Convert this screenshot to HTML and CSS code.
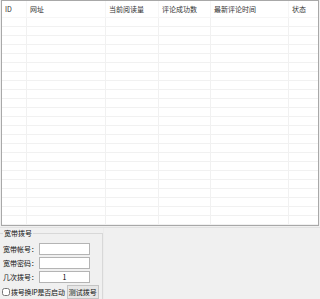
FILE: index.html
```html
<!DOCTYPE html>
<html lang="zh">
<head>
    <meta charset="UTF-8">
    <title>宽带拨号</title>
    <link rel="stylesheet" href="styles.css">
</head>
<body>
    <div class="list">
        <div class="row head">
            <span class="c1">ID</span>
            <span class="c2">网址</span>
            <span class="c3">当前阅读量</span>
            <span class="c4">评论成功数</span>
            <span class="c5">最新评论时间</span>
            <span class="c6">状态</span>
        </div>
        <div class="rows" id="rows"></div>
    </div>

    <div class="bottom">
        <fieldset class="group">
            <legend>宽带拨号</legend>
            <div class="field"><label>宽带帐号：</label><input type="text"></div>
            <div class="field"><label>宽带密码：</label><input type="password"></div>
            <div class="field"><label>几次拨号：</label><input type="text" class="num" value="1"></div>
            <div class="field last">
                <label class="check"><input type="checkbox">拨号换IP是否启动</label>
                <button>测试拨号</button>
            </div>
        </fieldset>
        <div class="side"></div>
    </div>

    <script>
        // empty grid rows
        const rows = document.getElementById('rows');
        for (let i = 0; i < 23; i++) {
            const row = document.createElement('div');
            row.className = 'row';
            for (let j = 1; j <= 6; j++) {
                const cell = document.createElement('span');
                cell.className = 'c' + j;
                row.appendChild(cell);
            }
            rows.appendChild(row);
        }
    </script>
</body>
</html>
```

FILE: styles.css
```css
body {
    margin: 0;
    width: 320px;
    height: 299px;
    overflow: hidden;
    background: #f0f0f0;
    font-family: "Noto Sans CJK SC", "DejaVu Sans", sans-serif;
    font-size: 7px;
    color: #222;
}

.list {
    width: 316px;
    height: 224px;
    margin-left: 1px;
    background: #fff;
    border: 1px solid #a8a8a8;
    overflow: hidden;
}

.row {
    display: flex;
    height: 9px;
    border-bottom: 1px solid #f1f1f1;
    box-sizing: border-box;
}

.row span {
    border-right: 1px solid #f1f1f1;
    box-sizing: border-box;
    padding-left: 3px;
    white-space: nowrap;
}

.row.head {
    height: 17px;
    align-items: center;
    border-bottom: 1px solid #f6f6f6;
}

.row.head span {
    border-right-color: #f6f6f6;
    line-height: 17px;
    color: #333;
}

.c1 { width: 25px; }
.c2 { width: 79px; }
.c3 { width: 53px; }
.c4 { width: 52px; }
.c5 { width: 78px; }
.c6 { flex: 1; border-right: none !important; }

.bottom {
    display: flex;
    height: 73px;
    border-top: 1px solid #e2e2e2;
    margin-top: 1px;
}

.group {
    width: 103px;
    flex: none;
    margin: 0;
    padding: 0 0 0 3px;
    border: none;
    border-top: 1px solid #d8d8d8;
    border-right: 1px solid #d8d8d8;
    box-sizing: border-box;
}

.group legend {
    padding: 0 1px;
    margin-left: 0;
    color: #111;
}

.field {
    display: flex;
    align-items: center;
    height: 13px;
    margin-top: 1px;
}

.field:first-of-type {
    margin-top: 4px;
}

.field label {
    width: 35px;
    color: #111;
}

.field input[type="text"],
.field input[type="password"] {
    width: 51px;
    height: 12px;
    padding: 0;
    margin: 0 0 0 1px;
    border: 1px solid #b4b4b4;
    box-sizing: border-box;
    background: #fff;
    font: inherit;
}

.field .num {
    text-align: center;
}

.field.last {
    margin-top: 2px;
}

.check {
    display: flex;
    align-items: center;
    width: auto !important;
    white-space: nowrap;
    margin-left: -1px;
    letter-spacing: -0.2px;
}

.check input {
    width: 8px;
    height: 8px;
    margin: 0 1px 0 0;
}

button {
    width: 32px;
    height: 14px;
    padding: 0;
    margin-left: 2px;
    font: inherit;
    white-space: nowrap;
    color: #111;
    background: #e6e6e6;
    border: 1px solid #c4c4c4;
}

.side {
    flex: 1;
    border-left: 1px solid #ececec;
}
```
